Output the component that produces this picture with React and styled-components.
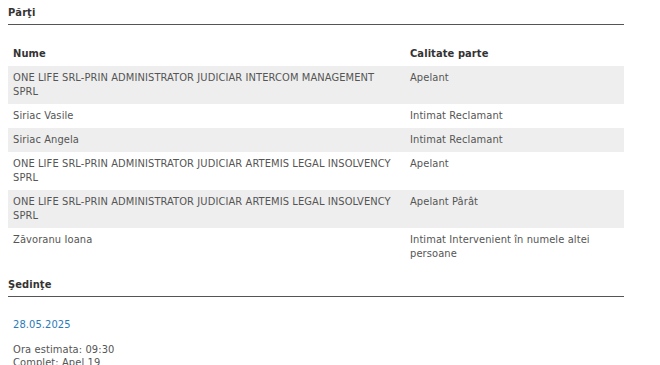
import React from "react"
import styled, { createGlobalStyle } from "styled-components"

const GlobalStyle = createGlobalStyle`
  body {
    margin: 0;
    background: #fff;
    font-family: "DejaVu Sans Condensed", "DejaVu Sans", sans-serif;
    font-size: 11px;
    letter-spacing: 0.1px;
    color: #555;
  }
`

const Page = styled.div`
  width: 616px;
  padding: 6px 0 0 8px;
`

const SectionTitle = styled.h3`
  margin: 0;
  padding: 0 0 4px;
  font-size: 11px;
  line-height: 14px;
  font-weight: bold;
  color: #333;
  border-bottom: 1px solid #555;
`

const Table = styled.table`
  width: 100%;
  margin: 16px 0 12px;
  border-collapse: collapse;
  table-layout: fixed;
`

const HeadCell = styled.th`
  text-align: left;
  font-weight: bold;
  color: #333;
  padding: 6px 5px 5px;
  line-height: 14px;
  width: ${(p) => p.$w || "auto"};
`

const Row = styled.tr`
  background: ${(p) => (p.$odd ? "#eeeeee" : "#fff")};
`

const Cell = styled.td`
  padding: 5px 5px;
  line-height: 14px;
  vertical-align: top;
`

const Hearing = styled.div`
  padding: 21px 5px 0;
`

const DateLink = styled.a`
  display: block;
  color: #2a7ab8;
  text-decoration: none;
  line-height: 14px;
  margin-bottom: 11px;
`

const Info = styled.div`
  line-height: 13px;
`

const parti = [
  ["ONE LIFE SRL-PRIN ADMINISTRATOR JUDICIAR INTERCOM MANAGEMENT SPRL", "Apelant"],
  ["Siriac Vasile", "Intimat Reclamant"],
  ["Siriac Angela", "Intimat Reclamant"],
  ["ONE LIFE SRL-PRIN ADMINISTRATOR JUDICIAR ARTEMIS LEGAL INSOLVENCY SPRL", "Apelant"],
  ["ONE LIFE SRL-PRIN ADMINISTRATOR JUDICIAR ARTEMIS LEGAL INSOLVENCY SPRL", "Apelant Pârât"],
  ["Zăvoranu Ioana", "Intimat Intervenient în numele altei persoane"],
]

export default function App() {
  return (
    <Page>
      <GlobalStyle />
      <SectionTitle>Părţi</SectionTitle>
      <Table>
        <thead>
          <tr>
            <HeadCell $w="387px">Nume</HeadCell>
            <HeadCell>Calitate parte</HeadCell>
          </tr>
        </thead>
        <tbody>
          {parti.map(([nume, calitate], i) => (
            <Row key={i} $odd={i % 2 === 0}>
              <Cell>{nume}</Cell>
              <Cell>{calitate}</Cell>
            </Row>
          ))}
        </tbody>
      </Table>
      <SectionTitle>Şedinţe</SectionTitle>
      <Hearing>
        <DateLink href="#">28.05.2025</DateLink>
        <Info>Ora estimata: 09:30</Info>
        <Info>Complet: Apel 19</Info>
      </Hearing>
    </Page>
  )
}
